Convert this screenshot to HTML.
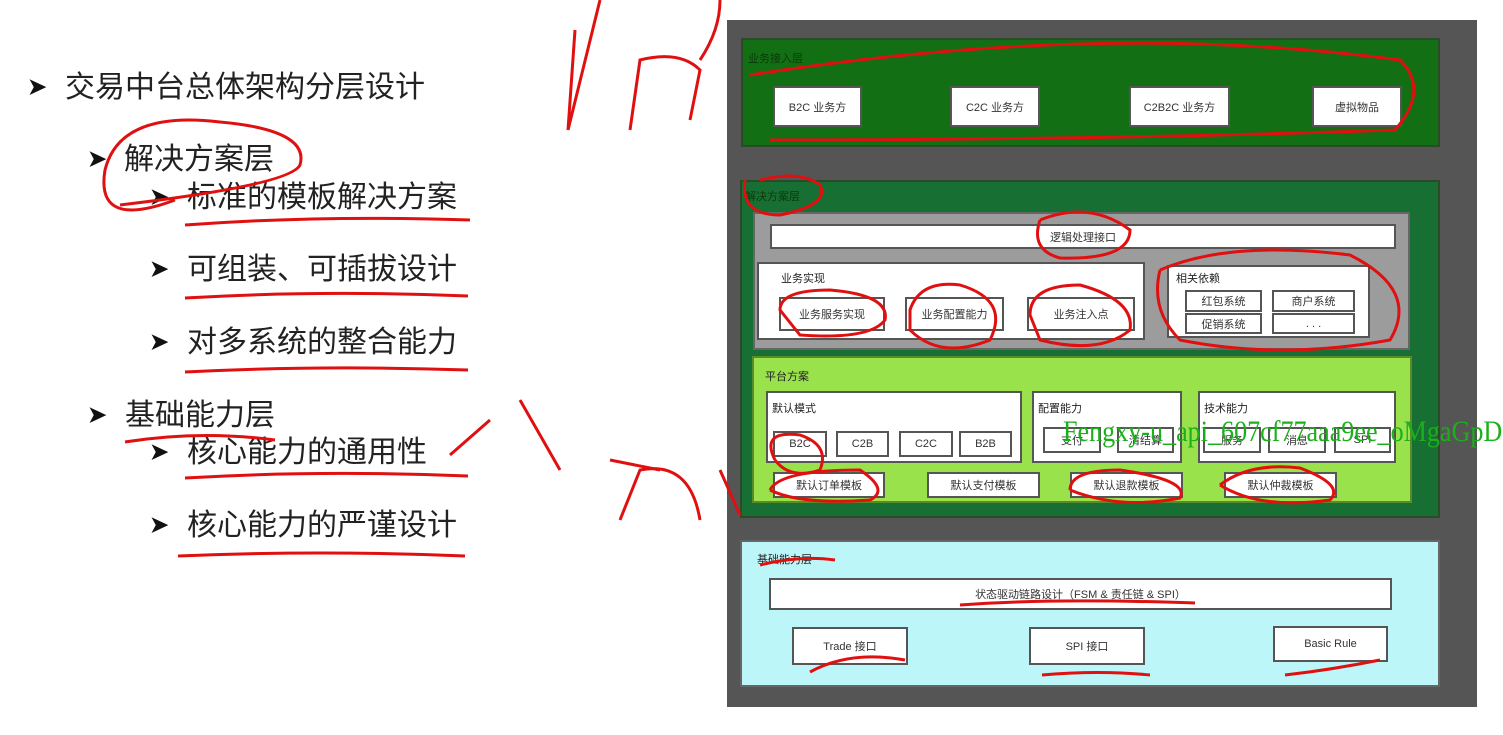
<!DOCTYPE html>
<html><head><meta charset="utf-8"><style>
body{margin:0;width:1503px;height:735px;background:#fff;position:relative;overflow:hidden;font-family:"Liberation Sans","Noto Sans CJK SC",sans-serif;}
.a{position:absolute;box-sizing:border-box;}
.t{position:absolute;font-size:30px;color:#222;white-space:nowrap;line-height:1;}
.t b{display:inline-block;font-size:22px;width:37px;color:#111;vertical-align:3px;}
.w{background:#fff;border:2px solid #555;font-size:11px;color:#333;display:flex;align-items:center;justify-content:center;}
.l{position:absolute;font-size:11px;color:#222;white-space:nowrap;}
</style></head><body>
<div class="t" style="left:28px;top:73px"><b>➤</b>交易中台总体架构分层设计</div>
<div class="t" style="left:88px;top:145px"><b style="width:36px">➤</b>解决方案层</div>
<div class="t" style="left:150px;top:183px"><b>➤</b>标准的模板解决方案</div>
<div class="t" style="left:150px;top:255px"><b>➤</b>可组装、可插拔设计</div>
<div class="t" style="left:150px;top:328px"><b>➤</b>对多系统的整合能力</div>
<div class="t" style="left:88px;top:401px"><b>➤</b>基础能力层</div>
<div class="t" style="left:150px;top:438px"><b>➤</b>核心能力的通用性</div>
<div class="t" style="left:150px;top:511px"><b>➤</b>核心能力的严谨设计</div>

<div class="a" style="left:727px;top:20px;width:750px;height:687px;background:#555"></div>
<div class="a" style="left:741px;top:38px;width:699px;height:109px;background:#136f14;border:2px solid #2a4a2a"></div>
<div class="l" style="left:748px;top:50px;color:#0a3a0a">业务接入层</div>
<div class="a w" style="left:773px;top:86px;width:89px;height:41px">B2C 业务方</div>
<div class="a w" style="left:950px;top:86px;width:90px;height:41px">C2C 业务方</div>
<div class="a w" style="left:1129px;top:86px;width:101px;height:41px">C2B2C 业务方</div>
<div class="a w" style="left:1312px;top:86px;width:90px;height:41px">虚拟物品</div>

<div class="a" style="left:740px;top:180px;width:700px;height:338px;background:#176f34;border:2px solid #2a4a2a"></div>
<div class="l" style="left:745px;top:188px;color:#0a3a0a">解决方案层</div>
<div class="a" style="left:753px;top:212px;width:657px;height:138px;background:#9c9c9c;border:2px solid #666"></div>
<div class="a w" style="left:770px;top:224px;width:626px;height:25px">逻辑处理接口</div>
<div class="a w" style="left:757px;top:262px;width:388px;height:78px"></div>
<div class="l" style="left:781px;top:270px">业务实现</div>
<div class="a w" style="left:779px;top:297px;width:106px;height:34px">业务服务实现</div>
<div class="a w" style="left:905px;top:297px;width:99px;height:34px">业务配置能力</div>
<div class="a w" style="left:1027px;top:297px;width:108px;height:34px">业务注入点</div>
<div class="a w" style="left:1167px;top:265px;width:203px;height:73px"></div>
<div class="l" style="left:1176px;top:270px">相关依赖</div>
<div class="a w" style="left:1185px;top:290px;width:77px;height:22px">红包系统</div>
<div class="a w" style="left:1272px;top:290px;width:83px;height:22px">商户系统</div>
<div class="a w" style="left:1185px;top:313px;width:77px;height:21px">促销系统</div>
<div class="a w" style="left:1272px;top:313px;width:83px;height:21px">. . .</div>

<div class="a" style="left:752px;top:356px;width:660px;height:147px;background:#9ae24c;border:2px solid #5a8a2a"></div>
<div class="l" style="left:765px;top:368px">平台方案</div>
<div class="a w" style="left:766px;top:391px;width:256px;height:72px"></div>
<div class="l" style="left:772px;top:400px">默认模式</div>
<div class="a w" style="left:773px;top:431px;width:54px;height:26px">B2C</div>
<div class="a w" style="left:836px;top:431px;width:53px;height:26px">C2B</div>
<div class="a w" style="left:899px;top:431px;width:54px;height:26px">C2C</div>
<div class="a w" style="left:959px;top:431px;width:53px;height:26px">B2B</div>
<div class="a w" style="left:1032px;top:391px;width:150px;height:72px"></div>
<div class="l" style="left:1038px;top:400px">配置能力</div>
<div class="a w" style="left:1043px;top:427px;width:58px;height:26px">支付</div>
<div class="a w" style="left:1117px;top:427px;width:57px;height:26px">清结算</div>
<div class="a w" style="left:1198px;top:391px;width:198px;height:72px"></div>
<div class="l" style="left:1204px;top:400px">技术能力</div>
<div class="a w" style="left:1203px;top:427px;width:58px;height:26px">服务</div>
<div class="a w" style="left:1268px;top:427px;width:58px;height:26px">消息</div>
<div class="a w" style="left:1334px;top:427px;width:57px;height:26px">SPI</div>
<div class="a w" style="left:773px;top:472px;width:112px;height:26px">默认订单模板</div>
<div class="a w" style="left:927px;top:472px;width:113px;height:26px">默认支付模板</div>
<div class="a w" style="left:1070px;top:472px;width:113px;height:26px">默认退款模板</div>
<div class="a w" style="left:1224px;top:472px;width:113px;height:26px">默认仲裁模板</div>

<div class="a" style="left:740px;top:540px;width:700px;height:147px;background:#bdf6f8;border:2px solid #666"></div>
<div class="l" style="left:757px;top:551px">基础能力层</div>
<div class="a w" style="left:769px;top:578px;width:623px;height:32px">状态驱动链路设计（FSM &amp; 责任链 &amp; SPI）</div>
<div class="a w" style="left:792px;top:627px;width:116px;height:38px">Trade 接口</div>
<div class="a w" style="left:1029px;top:627px;width:116px;height:38px">SPI 接口</div>
<div class="a w" style="left:1273px;top:626px;width:115px;height:36px">Basic Rule</div>

<div style="position:absolute;left:1063px;top:417px;font-family:'Liberation Serif',serif;font-size:30px;line-height:1;color:#1bb01b;white-space:nowrap;transform:scaleX(0.87);transform-origin:0 0">Fengxy-u_api_607cf77aaa9ee_oMgaGpD</div>

<svg class="a" style="left:0;top:0" width="1503" height="735" fill="none" stroke="#e01010" stroke-width="3">
<path d="M175 200 Q95 230 105 170 Q120 110 220 122 Q310 130 300 165 Q290 185 120 205"/>
<path d="M185 225 Q320 215 470 220"/><path d="M185 298 Q320 290 468 296"/>
<path d="M185 372 Q320 365 468 370"/><path d="M125 442 Q200 430 275 440"/>
<path d="M185 478 Q320 470 468 476"/><path d="M178 556 Q320 550 465 556"/>
<path d="M568 130 L575 30 M568 130 L600 0"/>
<path d="M630 130 L640 60 Q680 50 700 70 L690 120"/><path d="M700 60 Q720 30 720 0"/>
<path d="M750 75 Q1100 20 1400 60 Q1430 90 1395 130 Q1100 140 770 140"/>
<path d="M745 180 Q740 215 780 215 Q830 205 820 185 Q800 170 760 180"/>
<path d="M1040 220 Q1090 200 1130 230 Q1130 260 1060 258 Q1030 250 1040 220"/>
<path d="M1160 270 Q1230 240 1350 255 Q1420 290 1390 340 Q1280 360 1180 340 Q1150 310 1160 270"/>
<path d="M780 310 Q780 290 830 290 Q890 295 885 320 Q870 340 800 335 Z"/>
<path d="M910 310 Q920 280 960 285 Q1010 300 990 340 Q940 360 910 330 Z"/>
<path d="M1030 315 Q1030 285 1080 285 Q1135 300 1130 330 Q1100 355 1040 340 Z"/>
<path d="M450 455 L490 420 M520 400 L560 470 M610 460 L660 470 M620 520 L640 470 Q690 460 700 520 M720 470 L740 515"/>
<path d="M775 460 Q760 430 800 435 Q830 445 820 470 Q790 480 775 460"/>
<path d="M770 490 Q780 470 860 470 Q890 490 870 500 Q800 505 770 490"/>
<path d="M1070 490 Q1070 470 1120 470 Q1190 480 1180 498 Q1120 510 1070 490"/>
<path d="M1220 485 Q1250 462 1300 468 Q1345 485 1330 500 Q1260 510 1220 485"/>
<path d="M760 565 Q800 555 835 560"/><path d="M960 605 Q1050 598 1195 603"/>
<path d="M810 672 Q850 650 905 660"/><path d="M1042 675 Q1100 670 1150 675"/>
<path d="M1285 675 Q1330 670 1380 660"/>
</svg>
</body></html>
